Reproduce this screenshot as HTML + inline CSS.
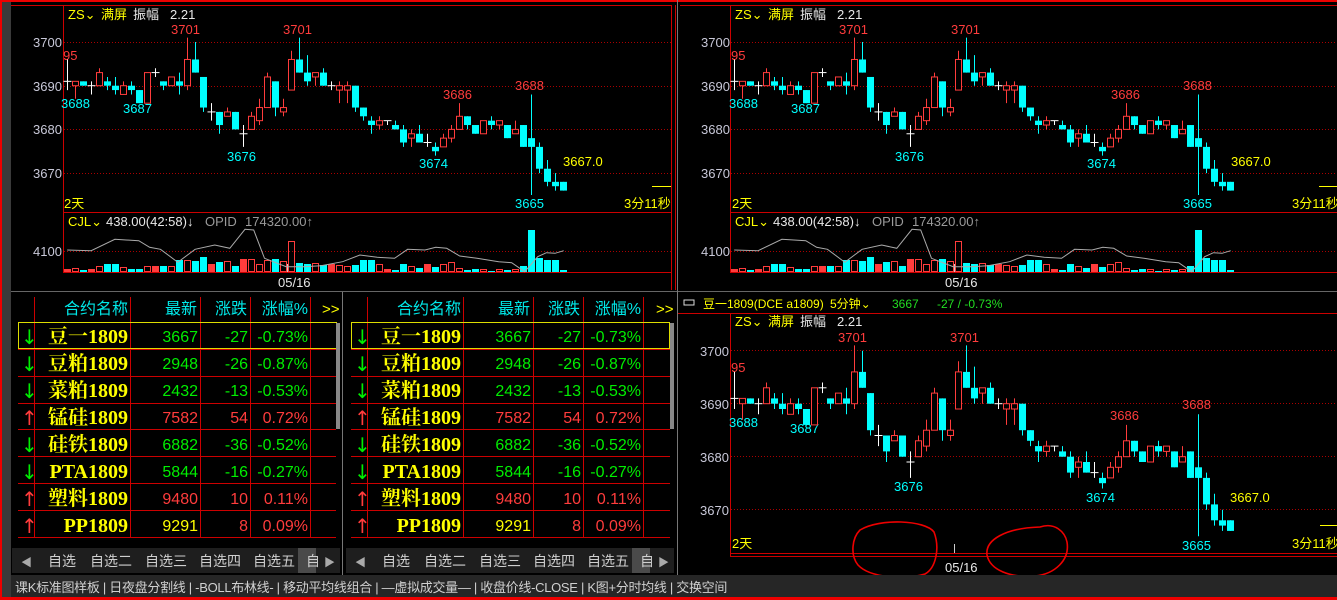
<!DOCTYPE html>
<html><head><meta charset="utf-8">
<style>
html,body{margin:0;padding:0;background:#000;width:1337px;height:600px;overflow:hidden}
svg{display:block}
text{font-family:"Liberation Sans","Noto Sans CJK SC",sans-serif}
.ax{fill:#c8c8d8;font-size:13px}
.r{fill:#ff3c3c;font-size:13px}
.c{fill:#00ffff;font-size:13px}
.y{fill:#ffff00;font-size:13px}
.w{fill:#e8e8e8;font-size:13px}
.g{fill:#9a9a9a;font-size:13px}
.hd{fill:#00e8e8;font-size:16px;text-anchor:end}
.nm text{fill:#ffff00;font-size:20px;font-weight:bold;text-anchor:end;font-family:"Liberation Serif","Noto Serif CJK SC",serif}
.num{font-size:16px;text-anchor:end}
.gr{fill:#00ee00}.rd{fill:#ff3c3c}.yl{fill:#ffff00}
.tab{fill:#cfcfcf;font-size:14px}
.bt{fill:#d0d0d0;font-size:14px}
.arr text{font-size:20px;font-family:"DejaVu Sans",sans-serif}
</style></head><body>
<svg id="s" width="1337" height="600" viewBox="0 0 1337 600" xmlns="http://www.w3.org/2000/svg">
<rect width="1337" height="600" fill="#000"/>
<rect x="0" y="0" width="11" height="600" fill="#3a3a3a"/>
<rect x="0" y="0" width="2" height="600" fill="#e00"/>
<rect x="0" y="0" width="1337" height="2" fill="#e00"/>
<rect x="0" y="597" width="1337" height="3" fill="#e00"/>
<line x1="11" y1="5.5" x2="672" y2="5.5" stroke="#c00"/>
<line x1="680" y1="5.5" x2="1337" y2="5.5" stroke="#c00"/>
<line x1="671.5" y1="5" x2="671.5" y2="290" stroke="#c00"/>
<line x1="675.5" y1="5" x2="675.5" y2="290" stroke="#c00"/>
<line x1="677.5" y1="0" x2="677.5" y2="575" stroke="#777"/>
<line x1="11" y1="291.5" x2="677" y2="291.5" stroke="#666"/>
<line x1="678" y1="291.5" x2="1337" y2="291.5" stroke="#666"/>

<rect x="63.5" y="5.5" width="608" height="267" fill="none" stroke="#c00"/>
<line x1="63" y1="212.5" x2="672" y2="212.5" stroke="#c00"/>
<g stroke="#a00" stroke-dasharray="1,2">
<line x1="64" y1="42.5" x2="671" y2="42.5"/><line x1="64" y1="86.5" x2="671" y2="86.5"/>
<line x1="64" y1="129.5" x2="671" y2="129.5"/><line x1="64" y1="173.5" x2="671" y2="173.5"/>
<line x1="64" y1="251.5" x2="671" y2="251.5"/></g>
<g class="ax"><text x="33" y="47">3700</text><text x="33" y="91">3690</text><text x="33" y="134">3680</text><text x="33" y="178">3670</text><text x="33" y="256">4100</text></g>
<text x="68" y="19" class="y">ZS⌄</text><text x="101" y="19" class="y">满屏</text><text x="133" y="19" class="w">振幅</text><text x="170" y="19" class="w">2.21</text>
<text x="171" y="34" class="r">3701</text><text x="283" y="34" class="r">3701</text>
<text x="63" y="60" class="r">95</text><text x="61" y="108" class="c">3688</text><text x="123" y="113" class="c">3687</text>
<text x="227" y="161" class="c">3676</text><text x="419" y="168" class="c">3674</text><text x="443" y="99" class="r">3686</text>
<text x="515" y="90" class="r">3688</text><text x="515" y="208" class="c">3665</text><text x="563" y="166" class="y">3667.0</text>
<text x="64" y="208" class="y">2天</text><text x="624" y="208" class="y">3分11秒</text>
<line x1="652" y1="186.5" x2="671" y2="186.5" stroke="#ff0"/>
<text x="68" y="226" class="y">CJL⌄</text><text x="106" y="226" class="w">438.00(42:58)↓</text><text x="205" y="226" class="g">OPID</text><text x="245" y="226" class="g">174320.00↑</text>
<text x="278" y="287" class="w">05/16</text>
<line x1="287.5" y1="264" x2="287.5" y2="272" stroke="#ccc"/>

<rect x="730.5" y="5.5" width="607" height="267" fill="none" stroke="#c00"/>
<line x1="730" y1="212.5" x2="1337" y2="212.5" stroke="#c00"/>
<g stroke="#a00" stroke-dasharray="1,2">
<line x1="731" y1="42.5" x2="1337" y2="42.5"/><line x1="731" y1="86.5" x2="1337" y2="86.5"/>
<line x1="731" y1="129.5" x2="1337" y2="129.5"/><line x1="731" y1="173.5" x2="1337" y2="173.5"/>
<line x1="731" y1="251.5" x2="1337" y2="251.5"/></g>
<g class="ax"><text x="701" y="47">3700</text><text x="701" y="91">3690</text><text x="701" y="134">3680</text><text x="701" y="178">3670</text><text x="701" y="256">4100</text></g>
<text x="735" y="19" class="y">ZS⌄</text><text x="768" y="19" class="y">满屏</text><text x="800" y="19" class="w">振幅</text><text x="837" y="19" class="w">2.21</text>
<text x="839" y="34" class="r">3701</text><text x="951" y="34" class="r">3701</text>
<text x="731" y="60" class="r">95</text><text x="729" y="108" class="c">3688</text><text x="791" y="113" class="c">3687</text>
<text x="895" y="161" class="c">3676</text><text x="1087" y="168" class="c">3674</text><text x="1111" y="99" class="r">3686</text>
<text x="1183" y="90" class="r">3688</text><text x="1183" y="208" class="c">3665</text><text x="1231" y="166" class="y">3667.0</text>
<text x="732" y="208" class="y">2天</text><text x="1292" y="208" class="y">3分11秒</text>
<line x1="1319" y1="186.5" x2="1337" y2="186.5" stroke="#ff0"/>
<text x="735" y="226" class="y">CJL⌄</text><text x="773" y="226" class="w">438.00(42:58)↓</text><text x="872" y="226" class="g">OPID</text><text x="912" y="226" class="g">174320.00↑</text>
<text x="945" y="287" class="w">05/16</text>
<line x1="954.5" y1="264" x2="954.5" y2="272" stroke="#ccc"/>

<rect x="684" y="300" width="10" height="5" fill="none" stroke="#ddd"/>
<text x="703" y="308" class="y" style="font-size:12px">豆一1809(DCE a1809)</text>
<text x="830" y="308" class="y" style="font-size:12px">5分钟⌄</text>
<text x="892" y="308" style="fill:#22dd22;font-size:12px">3667</text>
<text x="937" y="308" style="fill:#22dd22;font-size:12px">-27 / -0.73%</text>
<line x1="678" y1="313.5" x2="1337" y2="313.5" stroke="#c00"/>
<line x1="730.5" y1="314" x2="730.5" y2="557" stroke="#c00"/>
<line x1="730" y1="553.5" x2="1337" y2="553.5" stroke="#c00"/>
<line x1="730" y1="556.5" x2="1337" y2="556.5" stroke="#c00"/>
<g stroke="#a00" stroke-dasharray="1,2">
<line x1="731" y1="350.5" x2="1337" y2="350.5"/><line x1="731" y1="403.5" x2="1337" y2="403.5"/>
<line x1="731" y1="456.5" x2="1337" y2="456.5"/><line x1="731" y1="509.5" x2="1337" y2="509.5"/></g>
<g class="ax"><text x="700" y="356">3700</text><text x="700" y="409">3690</text><text x="700" y="462">3680</text><text x="700" y="515">3670</text></g>
<text x="735" y="326" class="y">ZS⌄</text><text x="768" y="326" class="y">满屏</text><text x="800" y="326" class="w">振幅</text><text x="837" y="326" class="w">2.21</text>
<text x="838" y="342" class="r">3701</text><text x="950" y="342" class="r">3701</text>
<text x="731" y="372" class="r">95</text><text x="729" y="427" class="c">3688</text><text x="790" y="433" class="c">3687</text>
<text x="894" y="491" class="c">3676</text><text x="1086" y="502" class="c">3674</text><text x="1110" y="420" class="r">3686</text>
<text x="1182" y="409" class="r">3688</text><text x="1182" y="550" class="c">3665</text><text x="1230" y="502" class="y">3667.0</text>
<text x="732" y="548" class="y">2天</text><text x="1292" y="548" class="y">3分11秒</text>
<line x1="1320" y1="525.5" x2="1337" y2="525.5" stroke="#ff0"/>
<text x="945" y="572" class="w">05/16</text>
<line x1="954.5" y1="544" x2="954.5" y2="553" stroke="#ccc"/>
<g fill="none" stroke="#e00" stroke-width="1.6">
<path d="M860,530 C880,518 925,520 934,532 C940,548 936,568 925,574 C905,580 870,578 858,565 C850,555 852,538 860,530 Z"/>
<path d="M1040,527 C1055,522 1065,532 1067,542 C1070,560 1055,574 1035,576 C1010,578 990,570 987,555 C985,540 1005,528 1040,527 Z"/>
</g>

<line x1="342.5" y1="292" x2="342.5" y2="575" stroke="#777"/>

<g>
<g stroke="#c00"><line x1="34.5" y1="297" x2="34.5" y2="538"/><line x1="130.5" y1="297" x2="130.5" y2="538"/><line x1="200.5" y1="297" x2="200.5" y2="538"/><line x1="250.5" y1="297" x2="250.5" y2="538"/><line x1="310.5" y1="297" x2="310.5" y2="538"/>
<line x1="18" y1="349.5" x2="336" y2="349.5"/><line x1="18" y1="376.5" x2="336" y2="376.5"/><line x1="18" y1="403.5" x2="336" y2="403.5"/><line x1="18" y1="429.5" x2="336" y2="429.5"/><line x1="18" y1="456.5" x2="336" y2="456.5"/><line x1="18" y1="483.5" x2="336" y2="483.5"/><line x1="18" y1="510.5" x2="336" y2="510.5"/><line x1="18" y1="537.5" x2="336" y2="537.5"/></g>
<rect x="18.5" y="322.5" width="318" height="26" fill="none" stroke="#dd0"/>
<rect x="336" y="323" width="4" height="106" fill="#888"/>
<text x="128" y="314" class="hd">合约名称</text><text x="197" y="314" class="hd">最新</text><text x="247" y="314" class="hd">涨跌</text><text x="308" y="314" class="hd">涨幅%</text><text x="322" y="314" class="y" style="font-size:15px">&gt;&gt;</text>
<g class="nm"><text x="128" y="343">豆一1809</text><text x="128" y="370">豆粕1809</text><text x="128" y="397">菜粕1809</text><text x="128" y="424">锰硅1809</text><text x="128" y="451">硅铁1809</text><text x="128" y="478">PTA1809</text><text x="128" y="505">塑料1809</text><text x="128" y="532">PP1809</text></g>
<g class="num">
<text x="198" y="342" class="gr">3667</text><text x="248" y="342" class="gr">-27</text><text x="308" y="342" class="gr">-0.73%</text>
<text x="198" y="369" class="gr">2948</text><text x="248" y="369" class="gr">-26</text><text x="308" y="369" class="gr">-0.87%</text>
<text x="198" y="396" class="gr">2432</text><text x="248" y="396" class="gr">-13</text><text x="308" y="396" class="gr">-0.53%</text>
<text x="198" y="423" class="rd">7582</text><text x="248" y="423" class="rd">54</text><text x="308" y="423" class="rd">0.72%</text>
<text x="198" y="450" class="gr">6882</text><text x="248" y="450" class="gr">-36</text><text x="308" y="450" class="gr">-0.52%</text>
<text x="198" y="477" class="gr">5844</text><text x="248" y="477" class="gr">-16</text><text x="308" y="477" class="gr">-0.27%</text>
<text x="198" y="504" class="rd">9480</text><text x="248" y="504" class="rd">10</text><text x="308" y="504" class="rd">0.11%</text>
<text x="198" y="531" class="yl">9291</text><text x="248" y="531" class="rd">8</text><text x="308" y="531" class="rd">0.09%</text></g>
<g class="arr"><text x="21" y="344" class="gr">↓</text><text x="21" y="371" class="gr">↓</text><text x="21" y="398" class="gr">↓</text><text x="21" y="425" class="rd">↑</text><text x="21" y="452" class="gr">↓</text><text x="21" y="479" class="gr">↓</text><text x="21" y="506" class="rd">↑</text><text x="21" y="533" class="rd">↑</text></g>
</g>

<g>
<g stroke="#c00"><line x1="367.5" y1="297" x2="367.5" y2="538"/><line x1="463.5" y1="297" x2="463.5" y2="538"/><line x1="533.5" y1="297" x2="533.5" y2="538"/><line x1="583.5" y1="297" x2="583.5" y2="538"/><line x1="643.5" y1="297" x2="643.5" y2="538"/>
<line x1="351" y1="349.5" x2="670" y2="349.5"/><line x1="351" y1="376.5" x2="670" y2="376.5"/><line x1="351" y1="403.5" x2="670" y2="403.5"/><line x1="351" y1="429.5" x2="670" y2="429.5"/><line x1="351" y1="456.5" x2="670" y2="456.5"/><line x1="351" y1="483.5" x2="670" y2="483.5"/><line x1="351" y1="510.5" x2="670" y2="510.5"/><line x1="351" y1="537.5" x2="670" y2="537.5"/></g>
<rect x="351.5" y="322.5" width="318" height="26" fill="none" stroke="#dd0"/>
<rect x="670" y="323" width="4" height="106" fill="#888"/>
<text x="461" y="314" class="hd">合约名称</text><text x="530" y="314" class="hd">最新</text><text x="580" y="314" class="hd">涨跌</text><text x="641" y="314" class="hd">涨幅%</text><text x="656" y="314" class="y" style="font-size:15px">&gt;&gt;</text>
<g class="nm"><text x="461" y="343">豆一1809</text><text x="461" y="370">豆粕1809</text><text x="461" y="397">菜粕1809</text><text x="461" y="424">锰硅1809</text><text x="461" y="451">硅铁1809</text><text x="461" y="478">PTA1809</text><text x="461" y="505">塑料1809</text><text x="461" y="532">PP1809</text></g>
<g class="num">
<text x="531" y="342" class="gr">3667</text><text x="581" y="342" class="gr">-27</text><text x="641" y="342" class="gr">-0.73%</text>
<text x="531" y="369" class="gr">2948</text><text x="581" y="369" class="gr">-26</text><text x="641" y="369" class="gr">-0.87%</text>
<text x="531" y="396" class="gr">2432</text><text x="581" y="396" class="gr">-13</text><text x="641" y="396" class="gr">-0.53%</text>
<text x="531" y="423" class="rd">7582</text><text x="581" y="423" class="rd">54</text><text x="641" y="423" class="rd">0.72%</text>
<text x="531" y="450" class="gr">6882</text><text x="581" y="450" class="gr">-36</text><text x="641" y="450" class="gr">-0.52%</text>
<text x="531" y="477" class="gr">5844</text><text x="581" y="477" class="gr">-16</text><text x="641" y="477" class="gr">-0.27%</text>
<text x="531" y="504" class="rd">9480</text><text x="581" y="504" class="rd">10</text><text x="641" y="504" class="rd">0.11%</text>
<text x="531" y="531" class="yl">9291</text><text x="581" y="531" class="rd">8</text><text x="641" y="531" class="rd">0.09%</text></g>
<g class="arr"><text x="354" y="344" class="gr">↓</text><text x="354" y="371" class="gr">↓</text><text x="354" y="398" class="gr">↓</text><text x="354" y="425" class="rd">↑</text><text x="354" y="452" class="gr">↓</text><text x="354" y="479" class="gr">↓</text><text x="354" y="506" class="rd">↑</text><text x="354" y="533" class="rd">↑</text></g>
</g>

<rect x="12" y="548" width="328" height="25" fill="#1e1e1e"/>
<rect x="298" y="548" width="18" height="25" fill="#4a4a4a"/>
<rect x="346" y="548" width="328" height="25" fill="#1e1e1e"/>
<rect x="632" y="548" width="18" height="25" fill="#4a4a4a"/>
<g class="tab">
<text x="21" y="566" fill="#aaa" style="font-size:11px">◀</text><text x="48" y="566">自选</text><text x="90" y="566">自选二</text><text x="145" y="566">自选三</text><text x="199" y="566">自选四</text><text x="253" y="566">自选五</text><text x="306" y="566">自</text><text x="324" y="566" fill="#aaa" style="font-size:11px">▶</text>
<text x="355" y="566" fill="#aaa" style="font-size:11px">◀</text><text x="382" y="566">自选</text><text x="424" y="566">自选二</text><text x="479" y="566">自选三</text><text x="533" y="566">自选四</text><text x="587" y="566">自选五</text><text x="640" y="566">自</text><text x="658" y="566" fill="#aaa" style="font-size:11px">▶</text>
</g>
<rect x="11" y="575" width="1326" height="22" fill="#262626"/>
<text x="15" y="592" class="bt" style="font-size:13px;letter-spacing:-0.3px">课K标准图样板 | 日夜盘分割线 | -BOLL布林线- | 移动平均线组合 | —虚拟成交量— | 收盘价线-CLOSE | K图+分时均线 | 交换空间</text>

<g id="cd"></g>
</svg>
<script>
var D=[[3691,3691,3696,3689],[3690,3691,3691,3687],[3691,3690,3691,3690],[3690,3690,3691,3688],[3690,3693,3694,3690],[3691,3690,3692,3689],[3690,3689,3692,3688],[3688,3690,3691,3688],[3690,3689,3691,3688],[3689,3686,3689,3686],[3686,3693,3693,3686],[3693,3693,3694,3692],[3691,3690,3691,3689],[3690,3692,3692,3690],[3691,3690,3693,3688],[3690,3696,3701,3689],[3696,3693,3700,3693],[3692,3685,3692,3684],[3684,3684,3686,3682],[3684,3681,3684,3679],[3683,3684,3685,3683],[3684,3680,3684,3680],[3679,3679,3681,3676],[3680,3683,3684,3680],[3682,3685,3687,3681],[3685,3692,3693,3685],[3691,3685,3691,3683],[3684,3685,3687,3683],[3689,3696,3698,3689],[3696,3693,3701,3693],[3693,3691,3697,3690],[3692,3693,3693,3690],[3693,3690,3694,3690],[3690,3690,3691,3689],[3689,3690,3691,3686],[3689,3690,3691,3686],[3690,3685,3690,3684],[3685,3683,3685,3682],[3682,3681,3683,3679],[3681,3682,3683,3680],[3682,3682,3682,3681],[3681,3680,3682,3680],[3680,3677,3681,3676],[3678,3679,3680,3676],[3679,3677,3681,3677],[3677,3677,3679,3676],[3676,3675,3677,3674],[3676,3678,3679,3676],[3678,3680,3681,3677],[3680,3683,3686,3680],[3683,3681,3683,3680],[3681,3679,3681,3679],[3679,3682,3682,3679],[3682,3681,3683,3680],[3681,3682,3682,3680],[3681,3678,3681,3678],[3679,3680,3682,3679],[3681,3676,3681,3676],[3678,3676,3688,3665],[3676,3671,3677,3670],[3671,3668,3673,3667],[3668,3667,3670,3666],[3668,3666,3668,3666]];
var V=[3,3,2,3,5,8,8,4,3,3,5,6,6,5,12,11,11,15,8,10,10,6,13,12,7,11,13,10,30,9,8,8,7,8,6,5,7,12,12,7,3,2,8,5,4,8,5,7,9,3,2,3,2,1,2,2,2,6,42,14,12,12,2];
var ns="http://www.w3.org/2000/svg",S=document.getElementById('cd');
function el(t,a){var e=document.createElementNS(ns,t);for(var k in a)e.setAttribute(k,a[k]);S.appendChild(e);}
function chart(x0,y0,k,vol){
 D.forEach(function(d,i){
  var x=Math.round(x0+i*8)+0.5,o=d[0],c=d[1],h=d[2],l=d[3];
  var Y=function(p){return y0+(3700-p)*k;};
  var col=c>o?'#ff3c3c':(c<o?'#00ffff':'#ffffff');
  el('line',{x1:x,x2:x,y1:Y(h),y2:Y(l),stroke:col});
  if(c>o) el('rect',{x:x-3,y:Y(c),width:6,height:Math.max(1,Y(o)-Y(c)),fill:'#000',stroke:col});
  else if(c<o) el('rect',{x:x-3.5,y:Y(o),width:7,height:Math.max(1,Y(c)-Y(o)),fill:col});
  else el('line',{x1:x-4,x2:x+4,y1:Y(o),y2:Y(o),stroke:col});
  if(vol){var v=V[i];
   if(c>o) el('rect',{x:x-3,y:271.5-v,width:6,height:v,fill:'none',stroke:'#ff3c3c'});
   else el('rect',{x:x-3.5,y:272-v,width:7,height:v,fill:c<o?'#00ffff':'#ff3c3c'});}
 });
}
chart(67,42,4.37,true);
chart(734,42,4.37,true);
chart(734,350.7,5.3,false);
var P=[[155,750],[210,752],[265,718],[320,722],[345,742],[370,748],[410,787],[450,748],[495,735],[530,745],[565,688],[585,690],[610,775],[660,800],[700,800],[740,797],[790,785],[830,765],[870,772],[910,775],[940,748],[980,750],[1005,742],[1030,745],[1060,768],[1100,775],[1150,785],[1180,788],[1210,815],[1240,770],[1260,758],[1280,760],[1300,752]];
[0,667].forEach(function(off){el('polyline',{points:P.map(function(p){return (off+p[0]/2.306).toFixed(1)+','+(p[1]/3).toFixed(1)}).join(' '),fill:'none',stroke:'#aaa','stroke-width':1});});
</script>
</body></html>
